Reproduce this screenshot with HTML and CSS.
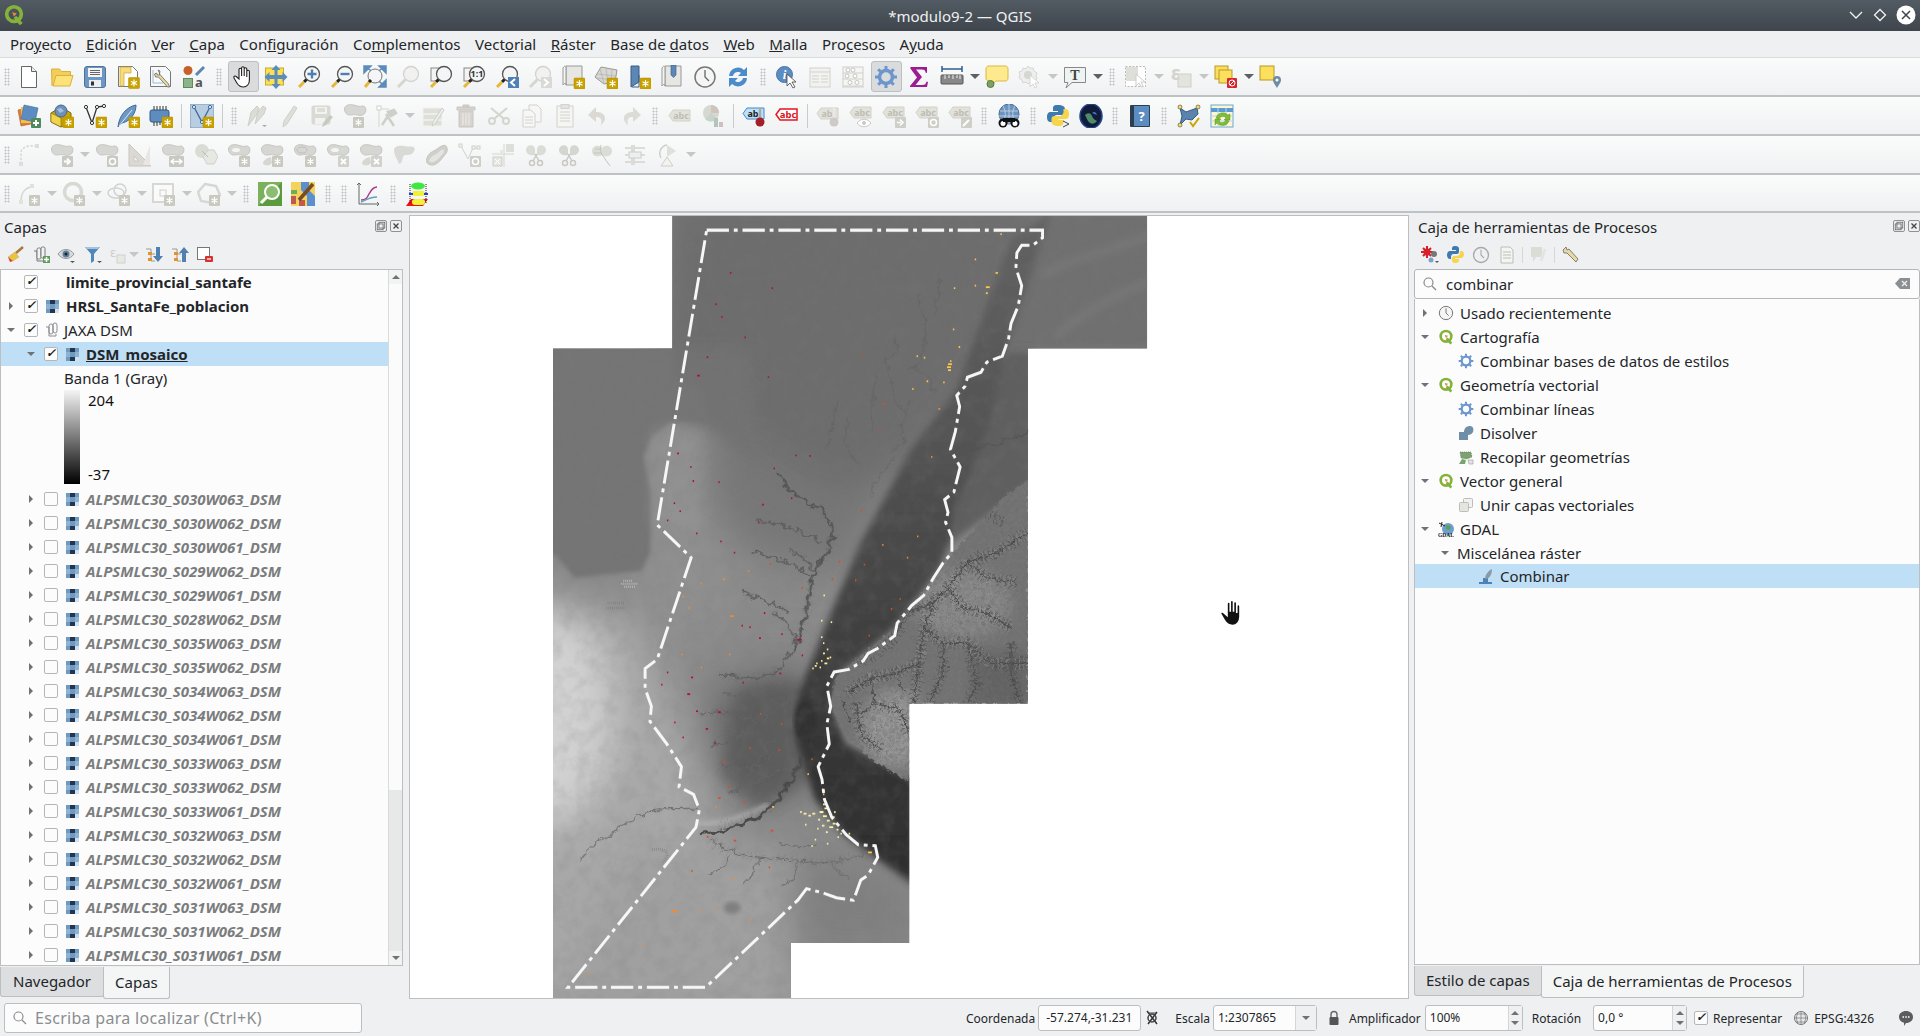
FILE: index.html
```html
<!DOCTYPE html>
<html lang="es">

<head>
    <meta charset="UTF-8">
    <title>*modulo9-2 — QGIS</title>
    <link rel="stylesheet" href="styles.css">
</head>

<body>
    <svg class="defs" width="0" height="0">
        <defs>
            <g id="bnew"><rect width="11" height="11" rx="1" fill="#c9a200" stroke="#b08d00" stroke-width=".5"/><path d="M5.5 2v7M2.5 3.7l6 3.6M8.5 3.7l-6 3.6" stroke="#fff" stroke-width="1.2"/></g>
            <g id="boff"><rect width="11" height="11" rx="1" fill="#c9c9c0"/><path d="M5.5 2v7M2.5 3.7l6 3.6M8.5 3.7l-6 3.6" stroke="#fff" stroke-width="1.2"/></g>
            <path id="blob" d="M1.5 6c0-4 5-5 9-4s6 2 9 1c3 0 4 3 3 6s-5 4-8 3-5 0-8 0-5-3-5-6z" fill="#d6d7d2" stroke="#c6c7c2"/>
            <g id="mag"><circle cx="15" cy="9" r="7.5" fill="#f4f5f6" stroke="#555" stroke-width="1.3"/><path d="M9.5 14.5 7 17" stroke="#222" stroke-width="3"/><path d="M7 17 2 22" stroke="#e8b73a" stroke-width="3"/></g>
            <g id="magoff"><circle cx="15" cy="9" r="7.5" fill="#f1f1ef" stroke="#d2d2ce" stroke-width="1.3"/><path d="M9.5 14.5 2 22" stroke="#d6d6d0" stroke-width="3"/></g>
            <path id="handp" d="M8 12V4.5a1.3 1.3 0 0 1 2.6 0V11V3a1.3 1.3 0 0 1 2.6 0v8V4a1.3 1.3 0 0 1 2.6 0v8V6.5a1.3 1.3 0 0 1 2.6 0V15c0 4-2.5 7-6 7s-5-1.5-6.5-4L3 13c-.8-1.4 1-2.6 2.2-1.5L8 14z"/>
            <path id="tag" d="M5 3h17v11H5L1 8.5z"/>
            <symbol id="qgis" viewBox="0 0 24 24"><circle cx="12" cy="11" r="8" fill="none" stroke="#85b23a" stroke-width="4"/><path d="M13 14l7 8" stroke="#85b23a" stroke-width="4"/><path d="M10 9l5 1-3 4z" fill="#e8883a"/></symbol>
            <symbol id="rast" viewBox="0 0 13 13"><rect width="13" height="13" fill="#dfe9f2"/><path d="M0 0h4v4H0zM9 0h4v4H9zM4 4h5v5H4zM0 9h4v4H0z" fill="#6f9ac2"/><path d="M4 0h5v4H4zM0 4h4v5H0zM4 9h5v4H4zM9 4h4v5H9z" fill="#22374f"/><path d="M9 4h4v5H9zM0 4h4v5H0z" fill="#8fb2d1"/><path d="M9 9h4v4H9z" fill="#d3e1ee"/></symbol>
            <symbol id="grp" viewBox="0 0 16 16"><path d="M2 5h3v9h7v-2" fill="none" stroke="#8a8c8e"/><rect x="5" y="2" width="4" height="10" rx="2" fill="none" stroke="#8a8c8e"/><rect x="9" y="1" width="4" height="10" rx="2" fill="none" stroke="#8a8c8e"/></symbol>
            <symbol id="gear" viewBox="0 0 24 24"><circle cx="12" cy="12" r="6.5" fill="none" stroke="#6d97cc" stroke-width="3.5"/><path d="M12 1v5M12 18v5M1 12h5M18 12h5M4.2 4.2l3.5 3.5M16.3 16.3l3.5 3.5M19.8 4.2l-3.5 3.5M7.7 16.3l-3.5 3.5" stroke="#6d97cc" stroke-width="3"/></symbol>
            <symbol id="clock" viewBox="0 0 24 24"><circle cx="12" cy="12" r="10" fill="#f5f5f5" stroke="#777" stroke-width="1.5"/><path d="M12 5v7l4 4" fill="none" stroke="#666" stroke-width="1.3"/></symbol>
        </defs>
    </svg>

    <header class="titlebar">
        <svg class="tb-logo"><use href="#qgis"/></svg>
        <span class="tb-title">*modulo9-2 — QGIS</span>
        <div class="win-btns">
            <svg width="16" height="16" viewBox="0 0 16 16"><path d="M2 5l6 6 6-6" fill="none" stroke="#f0f2f3" stroke-width="1.3"/></svg>
            <svg width="16" height="16" viewBox="0 0 16 16"><path d="M8 2.5 13.5 8 8 13.5 2.5 8z" fill="none" stroke="#f0f2f3" stroke-width="1.3"/></svg>
            <svg width="20" height="20" viewBox="0 0 20 20"><circle cx="10" cy="10" r="9.5" fill="#fff"/><path d="M6 6l8 8M14 6l-8 8" stroke="#3e444b" stroke-width="1.5"/></svg>
        </div>
    </header>

    <nav class="menubar">
        <span>Pro<u>y</u>ecto</span><span><u>E</u>dición</span><span><u>V</u>er</span><span><u>C</u>apa</span><span>Con<u>f</u>iguración</span><span>Co<u>m</u>plementos</span><span>Vect<u>o</u>rial</span><span><u>R</u>áster</span><span>Base de <u>d</u>atos</span><span><u>W</u>eb</span><span><u>M</u>alla</span><span>Pro<u>c</u>esos</span><span>A<u>y</u>uda</span>
    </nav>

    <!-- fila 1 -->
    <div class="toolbar">
        <i class="grip first"></i>
        <b class="tool"><svg viewBox="0 0 24 24"><path d="M4.5 1.5h10l5 5v16h-15z" fill="#fff" stroke="#666"/><path d="M14.5 1.5v5h5" fill="#eee" stroke="#666"/></svg></b>
        <b class="tool"><svg viewBox="0 0 24 24"><path d="M2 21 1.5 4h8l2 2.5h9V11" fill="#f3cf55" stroke="#d8b040"/><path d="M3 21 6 10.5h17L20 21z" fill="#fde27a" stroke="#d8b040"/></svg></b>
        <b class="tool"><svg viewBox="0 0 24 24"><rect x="1.5" y="1.5" width="21" height="21" rx="2.5" fill="#6d97c4" stroke="#4f7296"/><rect x="5" y="3" width="14" height="9" fill="#f4f4f4"/><path d="M7 5.5h10M7 7.5h10M7 9.5h10" stroke="#666"/><rect x="6" y="15" width="12" height="7" fill="#eee"/><rect x="8" y="16.5" width="3" height="4" fill="#333"/></svg></b>
        <b class="tool"><svg viewBox="0 0 24 24"><path d="M2.5 1.5h14l5 5v15h-19z" fill="#fff" stroke="#777"/><path d="M4 2v19h4V8h7V2z" fill="#f6dc7a" stroke="#c9a53a" stroke-width=".7"/><use href="#bnew" x="12.5" y="12.5"/></svg></b>
        <b class="tool"><svg viewBox="0 0 24 24"><path d="M1.5 1.5h15l5 5v15h-20z" fill="#f7f9fb" stroke="#777"/><path d="M4 5v13h10" fill="none" stroke="#9db9d6"/><path d="M9 5l2 1-.5 3 9 10 1 3h-2l-9-10-3 0-1-3 2-1 1 2h2v-2z" fill="#e8d9a0" stroke="#666" stroke-width=".8"/></svg></b>
        <b class="tool"><svg viewBox="0 0 24 24"><circle cx="6" cy="5.5" r="4.5" fill="#c8602c"/><path d="M14 10 22 2" stroke="#5b86b5" stroke-width="3"/><rect x="1.5" y="13.5" width="9" height="9" fill="#8cb48c" stroke="#5f8a5f"/><text x="13" y="22" class="svgt" font-size="13" fill="#555">a</text></svg></b>
        <i class="grip"></i>
        <b class="tool on"><svg viewBox="0 0 24 24"><use href="#handp" fill="#fff" stroke="#222" stroke-width="1.1"/></svg></b>
        <b class="tool"><svg viewBox="0 0 24 24"><rect x="1.5" y="3" width="18" height="17" fill="#fbe14f" stroke="#c9a82c"/><path d="M12 0l4.5 5h-3v5h5V7l5 5-5 5v-3h-5v5h3L12 24l-4.500-5h3v-5h-5v3l-5-5 5-5v3h5V5h-3z" fill="#5b8cbc"/></svg></b>
        <b class="tool"><svg viewBox="0 0 24 24"><use href="#mag"/><path d="M15 4.5v9M10.5 9h9" stroke="#4d7fb3" stroke-width="2.4"/></svg></b>
        <b class="tool"><svg viewBox="0 0 24 24"><use href="#mag"/><path d="M10.5 9h9" stroke="#4d7fb3" stroke-width="2.4"/></svg></b>
        <b class="tool"><svg viewBox="0 0 24 24"><path d="M1 1h7L1 8zM23 1h-7l7 7zM23 22h-7l7-7zM3 1l5 5M21 1l-5 5M21 21l-5-5" fill="#5b8cbc" stroke="#5b8cbc" stroke-width="1.5"/><circle cx="12" cy="11" r="7" fill="#f4f5f6" stroke="#777"/><path d="M7 16 2 22" stroke="#e8b73a" stroke-width="3"/><path d="M8 15l-2 2" stroke="#222" stroke-width="3"/></svg></b>
        <b class="tool"><svg viewBox="0 0 24 24"><use href="#magoff"/></svg></b>
        <b class="tool"><svg viewBox="0 0 24 24"><rect x="2" y="3" width="14" height="13" fill="#f3f3f3" stroke="#888"/><use href="#mag"/></svg></b>
        <b class="tool"><svg viewBox="0 0 24 24"><rect x="2" y="3" width="14" height="13" fill="#f3f3f3" stroke="#888"/><use href="#mag"/><text x="15" y="12" text-anchor="middle" class="svgt" font-size="9" font-weight="700" fill="#333">1:1</text></svg></b>
        <b class="tool"><svg viewBox="0 0 24 24"><use href="#mag"/><rect x="13" y="12" width="11" height="11" fill="#4f81b5"/><path d="M20 14l-4 3.5 4 3.5" fill="none" stroke="#fff" stroke-width="2"/></svg></b>
        <b class="tool"><svg viewBox="0 0 24 24"><use href="#magoff"/><rect x="13" y="12" width="11" height="11" fill="#d9d9d6"/><path d="M16 14l4 3.5-4 3.5" fill="none" stroke="#fff" stroke-width="2"/></svg></b>
        <b class="tool"><svg viewBox="0 0 24 24"><path d="M5 1h16v19H5z" fill="#e6e6e2" stroke="#999"/><path d="M2 3c2-3 3-2 3 0v17c0-2-2-2-3 0z" fill="#f4f4f0" stroke="#999"/><use href="#bnew" x="13" y="13"/></svg></b>
        <b class="tool"><svg viewBox="0 0 24 24"><path d="M1 12 7 2l16 3-2 12-11 2z" fill="#d8d8d3" stroke="#999"/><path d="M6 4l4 14M12 3l2 15M18 4l-1 13M3 9l19 2M2 13l19 2" stroke="#aaa" stroke-width=".6"/><use href="#bnew" x="13" y="13"/></svg></b>
        <b class="tool"><svg viewBox="0 0 24 24"><path d="M4 1h8v16l-8 5z" fill="#5b86b5" stroke="#3a5d84"/><path d="M12 10v12H5" fill="none" stroke="#3a5d84"/><use href="#bnew" x="13" y="13"/></svg></b>
        <b class="tool"><svg viewBox="0 0 24 24"><path d="M5 1h16v20H5z" fill="#e6e6e2" stroke="#999"/><path d="M2 3c2-3 3-2 3 0v18c0-2-2-2-3 0z" fill="#f4f4f0" stroke="#999"/><path d="M11 0h5v10l-2.5 2.5L11 10z" fill="#5b86b5" stroke="#3a5d84" stroke-width=".6"/></svg></b>
        <b class="tool"><svg><use href="#clock"/></svg></b>
        <b class="tool"><svg viewBox="0 0 24 24"><path d="M3 11a9 9 0 0 1 15-6l3-3v9h-9l3-3a5 5 0 0 0-8 3z" fill="#4d8cc8"/><path d="M21 13a9 9 0 0 1-15 6l-3 3v-9h9l-3 3a5 5 0 0 0 8-3z" fill="#4d8cc8"/></svg></b>
        <i class="grip"></i>
        <b class="tool"><svg viewBox="0 0 24 24"><circle cx="9.5" cy="9.5" r="8" fill="#5b8cc2" stroke="#4a76a5"/><text x="9.5" y="14" text-anchor="middle" class="svgti" font-size="13" fill="#fff">i</text><path d="M12 9v12l3-3 3 5 2-1-3-5h4z" fill="#fff" stroke="#444" stroke-width=".8"/></svg></b>
        <b class="tool"><svg viewBox="0 0 24 24"><rect x="2" y="3" width="20" height="19" fill="#f2f2f0" stroke="#d2d2ce"/><path d="M2 7h20M4 11h7M13 11h7M4 14h7M13 14h7M4 17h7M13 17h7" stroke="#d2d2ce"/></svg></b>
        <b class="tool"><svg viewBox="0 0 24 24"><rect x="2" y="2" width="20" height="19" fill="#f5f5f3" stroke="#cfcfca"/><path d="M2 8h20M2 14h20M1 22h22" stroke="#cfcfca"/><g fill="#fff" stroke="#c4c4bf"><circle cx="7" cy="5" r="2"/><circle cx="12" cy="5" r="2"/><circle cx="6" cy="11" r="2"/><circle cx="14" cy="11" r="2"/><circle cx="9" cy="17.5" r="2"/><circle cx="16" cy="17.5" r="2"/></g></svg></b>
        <b class="tool on"><svg><use href="#gear"/></svg></b>
        <b class="tool"><svg viewBox="0 0 24 24"><path d="M4 2h16v6l-1.5-.5c0-2-1-3-4-3H9l6 7.5-6.5 8H15c3 0 4-1 4.5-3.5l1.5.5L20 22H3v-1l7-8.5L3 3z" fill="#9c1c94"/></svg></b>
        <b class="tool"><svg viewBox="0 0 24 24"><path d="M2 4h20M2 1v6M22 1v6" stroke="#2f5f90" stroke-width="1.5" fill="none"/><rect x="1" y="10" width="22" height="9" rx="1" fill="#888" stroke="#555"/><path d="M5 10v4M9 10v3M13 10v4M17 10v3M20 10v4" stroke="#eee"/></svg></b>
        <b class="drop"></b>
        <b class="tool"><svg viewBox="0 0 24 24"><path d="M4 1h16c2 0 3 1 3 3v9c0 2-1 3-3 3H11l-3 3H5v-3c-3 0-4-1-4-3V4c0-2 1-3 3-3z" fill="#fdea8f" stroke="#dcb93e"/><circle cx="5.5" cy="19" r="3.5" fill="#7ca260" stroke="#557a3f"/></svg></b>
        <b class="tool"><svg viewBox="0 0 24 24"><path d="M10 1l2 2h3l1 3 3 2-1 3 1 3-3 1-1 3-3-1-2 2-2-2-3 1-1-3-3-2 1-3-1-3 3-1 1-3 3 1z" fill="#eee" stroke="#d6d6d2"/><circle cx="10" cy="10" r="4" fill="#d6d6d2"/><path d="M12 10v12l3-3 2 4 2-1-2-4h4z" fill="#fff" stroke="#d6d6d2"/></svg></b>
        <b class="drop off"></b>
        <b class="tool"><svg viewBox="0 0 24 24"><path d="M1.5 2.5h21v15H9L3 23l2-5.5H1.5z" fill="#eef4f4" stroke="#888"/><text x="12" y="15" text-anchor="middle" class="svgs" font-size="14" font-weight="700" fill="#444">T</text></svg></b>
        <b class="drop"></b>
        <i class="grip"></i>
        <b class="tool"><svg viewBox="0 0 24 24"><rect x="1.5" y="1.5" width="20" height="20" fill="#fff" stroke="#bbb" stroke-dasharray="2 1.5"/><rect x="2" y="2" width="12" height="14" fill="#dfdfd9"/><path d="M12 9v12l3-3 2 4 2-1-2-4h4z" fill="#fff" stroke="#ccc"/></svg></b>
        <b class="drop off"></b>
        <b class="tool"><svg viewBox="0 0 24 24"><rect x="9" y="9" width="13" height="13" fill="#e4e4de" stroke="#cfcfc8"/><text x="2" y="15" class="svgt" font-size="19" fill="#d4d4cf">ε</text></svg></b>
        <b class="drop off"></b>
        <b class="tool"><svg viewBox="0 0 24 24"><rect x="1" y="1" width="13" height="13" fill="#fbdf5d" stroke="#b99a25"/><rect x="5" y="5" width="13" height="13" fill="#fbdf5d" stroke="#b99a25"/><rect x="13" y="13" width="10" height="10" rx="1" fill="#d9242c"/><circle cx="18" cy="18" r="3" fill="none" stroke="#fff"/><path d="M16 20l4-4" stroke="#fff"/></svg></b>
        <b class="drop"></b>
        <b class="tool"><svg viewBox="0 0 24 24"><rect x="1" y="1" width="14" height="14" fill="#fbdf5d" stroke="#b99a25"/><path d="M18 23c-3-5-4-6-4-8a4 4 0 0 1 8 0c0 2-1 3-4 8z" fill="#6f8ca3"/><circle cx="18" cy="15" r="1.5" fill="#fff"/></svg></b>
    </div>

    <!-- fila 2 -->
    <div class="toolbar">
        <i class="grip first"></i>
        <b class="tool"><svg viewBox="0 0 24 24"><path d="M1 6l10-2 3 16-10 2z" fill="#e07a3c" stroke="#b05a22" stroke-width=".6"/><path d="M4 3h13v16H4z" fill="#f3c24a"/><path d="M7 1l14 3-3 14-14-3z" fill="#5b8cc2" stroke="#3e6a9a" stroke-width=".6"/><rect x="14" y="14" width="10" height="10" rx="1" fill="#4e8a5e"/><path d="M19 16v6M16 19h6" stroke="#fff" stroke-width="2"/></svg></b>
        <b class="tool"><svg viewBox="0 0 24 24"><path d="M1 9l10-6 10 6v9l-10 5-10-5z" fill="#c9a600" stroke="#7d6a10"/><path d="M1 9l10 5v9l-10-5z" fill="#f0d34a" stroke="#7d6a10" stroke-width=".6"/><circle cx="11" cy="7" r="6" fill="#6d90bc" stroke="#46688e"/><path d="M7 5l4-1 3 3-4 2z" fill="#a9c0d9"/><use href="#bnew" x="13" y="13"/></svg></b>
        <b class="tool"><svg viewBox="0 0 24 24"><path d="M3 3l6 16L14 3l7-1" fill="none" stroke="#333" stroke-width="1.3"/><g fill="#fff" stroke="#333"><circle cx="3" cy="3" r="1.6"/><circle cx="14" cy="3" r="1.6"/><circle cx="21" cy="2" r="1.6"/><circle cx="9" cy="19" r="1.6"/></g><use href="#bnew" x="13" y="13"/></svg></b>
        <b class="tool"><svg viewBox="0 0 24 24"><path d="M2 23C3 12 10 3 20 1c0 8-5 16-14 18z" fill="#6d97c4" stroke="#3e6a9a"/><path d="M3 22 16 6" stroke="#dce8f2"/><use href="#bnew" x="13" y="13"/></svg></b>
        <b class="tool"><svg viewBox="0 0 24 24"><rect x="1" y="6" width="19" height="12" rx="2" fill="#5e8cbe" stroke="#2f5a85"/><path d="M5 2v4M8 2v4M11 2v4M14 2v4M17 2v4M5 18v4M8 18v4M11 18v3" stroke="#333"/><use href="#bnew" x="13" y="13"/></svg></b>
        <i class="sep"></i>
        <b class="tool"><svg viewBox="0 0 24 24"><rect width="24" height="24" rx="2" fill="#b9cde2" stroke="#7a9ab8"/><path d="M4 3l8 15L20 3" fill="none" stroke="#3e6a9a" stroke-width="1.3"/><g fill="#eef3f8" stroke="#3e6a9a"><circle cx="4" cy="3" r="1.6"/><circle cx="20" cy="3" r="1.6"/><circle cx="12" cy="18" r="1.6"/></g><use href="#bnew" x="13" y="13"/></svg></b>
        <i class="sep"></i><i class="grip narrow"></i>
        <b class="tool"><svg viewBox="0 0 24 24"><path d="M4 22 7 8l6-6 2 2-2 6z" fill="#dcdcd7" stroke="#cfcfc9"/><path d="M11 20l3-12 5-6 3 2-2 6z" fill="#dcdcd7" stroke="#cfcfc9"/><path d="M18 21h5l-2.5 2z" fill="#a8a8a8"/></svg></b>
        <b class="tool"><svg viewBox="0 0 24 24"><path d="M6 23l1-6L17 2l3 2L10 20z" fill="#dedfd9" stroke="#cfcfc9"/></svg></b>
        <b class="tool"><svg viewBox="0 0 24 24"><rect x="1.5" y="1.5" width="19" height="19" rx="2" fill="#dadad5"/><rect x="5" y="3" width="12" height="7" fill="#f2f2f0"/><path d="M7 5h8M7 7h8" stroke="#c8c8c3"/><rect x="5" y="14" width="10" height="6" fill="#f2f2f0"/><path d="M12 23l1-4 7-8 3 2-7 8z" fill="#c9c9c3"/></svg></b>
        <b class="tool"><svg viewBox="0 0 24 24"><g transform="translate(0 -1)"><use href="#blob"/></g><use href="#boff" x="10" y="13"/></svg></b>
        <b class="tool"><svg viewBox="0 0 24 24"><path d="M3 3v20M3 5h10" fill="none" stroke="#d6d6d2"/><rect x="1" y="2" width="4" height="4" fill="#fff" stroke="#cfcfca"/><path d="M6 21 14 9M10 10l8 12M12 8l6-2 2 3-5 3z" stroke="#cfcfc9" stroke-width="2.5" fill="#cfcfc9"/></svg></b>
        <b class="drop off"></b>
        <b class="tool"><svg viewBox="0 0 24 24"><path d="M2 4h19v6H2zM2 10h19v6H2zM2 16h19v6H2z" fill="#dedfd9" stroke="#f2f2f0"/><path d="M11 22l1-4 9-14 2 2-9 14z" fill="#eee" stroke="#cfcfc9"/></svg></b>
        <b class="tool"><svg viewBox="0 0 24 24"><path d="M3 3h18v3H3zM9 1h6v2H9zM5 7h14v16H5z" fill="#d7d4d0" stroke="#c9c6c2"/><path d="M9 9v12M12 9v12M15 9v12" stroke="#eeecea"/></svg></b>
        <b class="tool"><svg viewBox="0 0 24 24"><g fill="none" stroke="#d5d5d0" stroke-width="2"><circle cx="5" cy="17" r="3"/><circle cx="19" cy="17" r="3"/><path d="M7 15 20 4M17 15 4 4"/></g></svg></b>
        <b class="tool"><svg viewBox="0 0 24 24"><g fill="#f7f7f5" stroke="#d2d2ce"><path d="M9 1h8l4 4v13H9z"/><path d="M3 6h8l4 4v13H3z"/></g><path d="M5 13h8M5 16h8M5 19h8" stroke="#d2d2ce"/></svg></b>
        <b class="tool"><svg viewBox="0 0 24 24"><rect x="4" y="2" width="16" height="21" fill="#f5f5f3" stroke="#d2d2ce"/><rect x="8" y="0.5" width="8" height="4" fill="#e4e4e0" stroke="#d2d2ce"/><path d="M7 8h10M7 11h10M7 14h10M7 17h10" stroke="#d2d2ce"/></svg></b>
        <b class="tool"><svg viewBox="0 0 24 24"><path d="M10 3 2 11l8 7v-5c5 0 6 2 5 8 6-4 6-13-5-13z" fill="#dcd8d3"/></svg></b>
        <b class="tool"><svg viewBox="0 0 24 24"><path d="M14 3l8 8-8 7v-5c-5 0-6 2-5 8-6-4-6-13 5-13z" fill="#dcdcd6"/></svg></b>
        <i class="grip"></i>
        <b class="tool"><svg viewBox="0 0 24 24"><use href="#tag" y="3" fill="#e2e2da" stroke="#d2d2c9"/><text x="13" y="15" text-anchor="middle" class="svgt" font-size="9" font-weight="700" fill="#bdbdb5">abc</text></svg></b>
        <b class="tool"><svg viewBox="0 0 24 24"><circle cx="10" cy="9" r="8" fill="#d6d8d2"/><path d="M10 9V1a8 8 0 0 1 8 8z" fill="#cfc3bc"/><path d="M10 9l6 6a8 8 0 0 1-12 0z" fill="#c8d3ca"/><rect x="13" y="14" width="4" height="9" fill="#b3c4bc"/><rect x="18" y="18" width="4" height="5" fill="#cfbfc0"/></svg></b>
        <i class="sep"></i>
        <b class="tool"><svg viewBox="0 0 24 24"><use href="#tag" y="1" fill="#bfe0f8" stroke="#3a8ad0"/><text x="11" y="13" text-anchor="middle" class="svgt" font-size="9" font-weight="700" fill="#222">ab</text><path d="M18 4v10" stroke="#aaa" stroke-width="2.5"/><circle cx="18" cy="18" r="4.5" fill="#a3202a"/></svg></b>
        <b class="tool"><svg viewBox="0 0 24 24"><use href="#tag" y="2" fill="#fff" stroke="#e8141e" stroke-width="1.5"/><text x="13" y="14" text-anchor="middle" class="svgt" font-size="9.5" font-weight="700" fill="#d8141e">abc</text></svg></b>
        <i class="sep"></i>
        <b class="tool"><svg viewBox="0 0 24 24"><use href="#tag" y="1" fill="#e2e2da" stroke="#d2d2c9"/><text x="11" y="13" text-anchor="middle" class="svgt" font-size="9" font-weight="700" fill="#bdbdb5">ab</text><path d="M18 4v10" stroke="#e8e8e6" stroke-width="2.5"/><circle cx="18" cy="18" r="4.5" fill="#cfc9c9"/></svg></b>
        <b class="tool"><svg viewBox="0 0 24 24"><use href="#tag" y="0" fill="#e2e2da" stroke="#d2d2c9"/><text x="13" y="12" text-anchor="middle" class="svgt" font-size="9" font-weight="700" fill="#bdbdb5">abc</text><path d="M8 19c4-5 10-5 14 0-4 5-10 5-14 0z" fill="#fff" stroke="#c8c8c8"/><circle cx="15" cy="19" r="2" fill="#c8c8c8"/></svg></b>
        <b class="tool"><svg viewBox="0 0 24 24"><use href="#tag" y="0" fill="#e2e2da" stroke="#d2d2c9"/><text x="13" y="12" text-anchor="middle" class="svgt" font-size="9" font-weight="700" fill="#bdbdb5">abc</text><rect x="13" y="13" width="11" height="11" rx="1" fill="#cfcfca"/><path d="M15 18.5h4M18 15.5l3 3-3 3" stroke="#fff" stroke-width="1.5" fill="none"/></svg></b>
        <b class="tool"><svg viewBox="0 0 24 24"><use href="#tag" y="0" fill="#e2e2da" stroke="#d2d2c9"/><text x="13" y="12" text-anchor="middle" class="svgt" font-size="9" font-weight="700" fill="#bdbdb5">abc</text><rect x="13" y="13" width="11" height="11" rx="1" fill="#cfcfca"/><circle cx="18.5" cy="18.5" r="3" fill="none" stroke="#fff" stroke-width="1.5"/></svg></b>
        <b class="tool"><svg viewBox="0 0 24 24"><use href="#tag" y="0" fill="#e2e2da" stroke="#d2d2c9"/><text x="13" y="12" text-anchor="middle" class="svgt" font-size="9" font-weight="700" fill="#bdbdb5">abc</text><rect x="13" y="13" width="11" height="11" rx="1" fill="#cfcfca"/><path d="M15 22l6-6" stroke="#fff" stroke-width="2"/></svg></b>
        <i class="grip"></i>
        <b class="tool"><svg viewBox="0 0 24 24"><circle cx="12" cy="10" r="10" fill="#6d93bf" stroke="#4a6d94"/><path d="M3 7h18M2 12h20M12 0v20M6 2c3 5 3 11 0 16M18 2c-3 5-3 11 0 16" fill="none" stroke="#c9d9ea" stroke-width=".8"/><circle cx="6" cy="19" r="4.5" fill="#111"/><circle cx="18" cy="19" r="4.5" fill="#111"/><circle cx="6" cy="19.5" r="2.5" fill="#fff"/><circle cx="18" cy="19.5" r="2.5" fill="#fff"/><path d="M6 14h12v4H6z" fill="#111"/></svg></b>
        <i class="grip"></i>
        <b class="tool"><svg viewBox="0 0 24 24"><path d="M11.5 1C7 1 7 3 7 5v2h5v1H5c-3 0-4 2-4 5s1 5 4 5h2v-3c0-2 2-4 4-4h5c2 0 3-1 3-3V5c0-2-2-4-7.5-4z" fill="#3d7ab0"/><path d="M12.5 22c4.5 0 5-2 5-4v-2h-5v-1h7c2.5 0 3.5-2 3.5-5s-1-5-4-5h-1.5v3c0 2-2 4-4 4h-5c-2 0-3 1-3 3v3c0 2 2 4 7.5 4z" fill="#f6d44b"/><path d="M17 17l6 3-6 3" fill="none" stroke="#444"/></svg></b>
        <b class="tool"><svg viewBox="0 0 24 24"><ellipse cx="12" cy="12" rx="11" ry="12" fill="#111c3a" stroke="#24458c" stroke-width="1.5"/><path d="M6 11c3-3 6-2 7 1s3 4 5 5c-3 4-7 3-9 0z" fill="#4f8a6a"/><path d="M13 9c2-2 4-1 5 2z" fill="#4a78b8"/></svg></b>
        <i class="grip"></i>
        <b class="tool"><svg viewBox="0 0 24 24"><rect x="2" y="1" width="20" height="22" rx="1" fill="#2c3e50"/><rect x="6" y="2" width="15" height="20" fill="#5b8cc2"/><text x="13.5" y="17" text-anchor="middle" class="svgt" font-size="13" fill="#fff">?</text></svg></b>
        <i class="grip"></i>
        <b class="tool"><svg viewBox="0 0 24 24"><path d="M3 4l6 4 11-4 1 6-6 6-6-1-6 6 2-9z" fill="#5c83ad" stroke="#3a5a7d"/><g fill="#f3df5a" stroke="#444" stroke-width=".6"><circle cx="3" cy="3" r="2"/><circle cx="21" cy="3" r="2"/><circle cx="3" cy="21" r="2"/></g><path d="M13 18l3 4 6-8" fill="none" stroke="#c9a600" stroke-width="2"/></svg></b>
        <b class="tool"><svg viewBox="0 0 24 24"><rect x="1" y="1" width="22" height="22" fill="#fdf6cf" stroke="#6aa6d8"/><path d="M1 6h22" stroke="#5b9bd5" stroke-width="4"/><path d="M1 12h22M1 17h22M8 4v19M16 4v19" stroke="#b9d3ea"/><path d="M6 14a7 7 0 0 1 12-3l2-1v6h-6l2-2a4 4 0 0 0-7 1zM19 17a7 7 0 0 1-12 2l-2 2v-6h6l-2 2a4 4 0 0 0 7-1z" fill="#7cbd3c" stroke="#4f8c1e" stroke-width=".4"/></svg></b>
    </div>

    <!-- fila 3 -->
    <div class="toolbar">
        <i class="grip first"></i>
        <b class="tool"><svg viewBox="0 0 24 24"><path d="M4 21V10c0-4 3-6 8-7h8" fill="none" stroke="#d6d6d2" stroke-dasharray="2.5 1.5" stroke-width="1.5"/><rect x="2" y="19" width="4" height="4" fill="#dedfda"/><rect x="18" y="1" width="4" height="4" fill="#dedfda"/></svg></b>
        <b class="tool"><svg viewBox="0 0 24 24"><use href="#blob"/><rect x="12" y="13" width="11" height="11" rx="1" fill="#c9c9c3"/><path d="M14 18.5h4M17 15.5l3 3-3 3" stroke="#fff" stroke-width="1.8" fill="none"/></svg></b>
        <b class="drop off"></b>
        <b class="tool"><svg viewBox="0 0 24 24"><use href="#blob"/><rect x="12" y="13" width="11" height="11" rx="1" fill="#c9c9c3"/><circle cx="17.5" cy="18.5" r="3" fill="none" stroke="#fff" stroke-width="1.5"/></svg></b>
        <b class="tool"><svg viewBox="0 0 24 24"><path d="M1 1l22 22H1z" fill="#dcd8d3" stroke="#c9c5c0"/><path d="M6 13l5 5H6z" fill="#f4f4f2" stroke="#c9c5c0"/><path d="M22 2v20h-7" fill="#e8e6e2"/></svg></b>
        <b class="tool"><svg viewBox="0 0 24 24"><use href="#blob"/><rect x="8" y="13" width="15" height="11" rx="1" fill="#c9c9c3"/><path d="M10 18.5h11M13 16l-3 2.5 3 2.5M18 16l3 2.5-3 2.5" stroke="#fff" stroke-width="1.3" fill="none"/></svg></b>
        <b class="tool"><svg viewBox="0 0 24 24"><circle cx="8" cy="8" r="7" fill="#dcdcd7"/><path d="M14 7h6l4 7-4 7h-7l-4-7z" fill="#e8e8e3" stroke="#d0d0cb"/><path d="M8 8l6 6" stroke="#bbb"/></svg></b>
        <b class="tool"><svg viewBox="0 0 24 24"><use href="#blob"/><ellipse cx="9" cy="7" rx="4" ry="2" fill="#f4f4f2"/><use href="#boff" x="12" y="13"/></svg></b>
        <b class="tool"><svg viewBox="0 0 24 24"><use href="#blob"/><path d="M3 21c0-4 4-6 8-7l1 6c-2 3-7 3-9 1z" fill="#d6d7d2"/><use href="#boff" x="12" y="13"/></svg></b>
        <b class="tool"><svg viewBox="0 0 24 24"><use href="#blob"/><ellipse cx="9" cy="7" rx="5" ry="3" fill="none" stroke="#c0c1bc"/><use href="#boff" x="12" y="13"/></svg></b>
        <b class="tool"><svg viewBox="0 0 24 24"><use href="#blob"/><ellipse cx="9" cy="7" rx="4" ry="2" fill="#f4f4f2"/><rect x="12" y="13" width="11" height="11" rx="1" fill="#d2d2cc"/><path d="M15 16l5 5M20 16l-5 5" stroke="#fff" stroke-width="1.8"/></svg></b>
        <b class="tool"><svg viewBox="0 0 24 24"><use href="#blob"/><path d="M3 21c0-4 4-6 8-7l1 6c-2 3-7 3-9 1z" fill="#d6d7d2"/><rect x="12" y="13" width="11" height="11" rx="1" fill="#d2d2cc"/><path d="M15 16l5 5M20 16l-5 5" stroke="#fff" stroke-width="1.8"/></svg></b>
        <b class="tool"><svg viewBox="0 0 24 24"><path d="M2 7c0-4 6-5 10-4s7 0 10 1c2 3-1 9-8 8-3 0-3 2-4 6-1 3-3 4-4 1-1-4-4-7-4-12z" fill="#d9dad5"/></svg></b>
        <b class="tool"><svg viewBox="0 0 24 24"><path d="M2 15C4 9 8 9 12 6s9-6 10-1-2 6-4 9-7 9-12 8-5-4-4-7z" fill="#cfd0cb" stroke="#c4c5c0"/><path d="M5 16c2-4 6-4 9-7s5-3 5-1-3 5-5 7-5 5-8 4-2-2-1-3z" fill="#e4e4e0"/></svg></b>
        <b class="tool"><svg viewBox="0 0 24 24"><path d="M3 3l7 13 5-11 5 0" fill="none" stroke="#d2d2ce"/><g fill="#f5f5f3" stroke="#cfcfca"><rect x="1" y="1" width="3" height="3"/><rect x="14" y="3" width="3" height="3"/><rect x="19" y="3" width="3" height="3"/></g><rect x="12" y="13" width="11" height="11" rx="1" fill="#cfcfc9"/><circle cx="17.5" cy="18.5" r="3" fill="none" stroke="#fff" stroke-width="1.5"/></svg></b>
        <b class="tool"><svg viewBox="0 0 24 24"><path d="M13 1v23M1 11h22" stroke="#d6d6d2"/><rect x="9" y="7" width="4" height="4" fill="#e6e6e2"/><rect x="15" y="1" width="8" height="8" fill="#dfdfd9"/><rect x="2" y="14" width="9" height="9" fill="#e6e6e0" stroke="#cfcfca"/><path d="M4 16l5 5M9 16l-5 5" stroke="#fff"/></svg></b>
        <b class="tool"><svg viewBox="0 0 24 24"><path d="M11 12c-5 1-9-1-9-5 0-5 8-7 9-1zM13 12c5 1 9-1 9-5 0-5-8-7-9-1z" fill="#dcdcd7"/><g fill="none" stroke="#c9c9c4" stroke-width="1.5"><circle cx="8" cy="20" r="2.5"/><circle cx="16" cy="20" r="2.5"/><path d="M9 18l4-7M15 18l-4-7"/></g></svg></b>
        <b class="tool"><svg viewBox="0 0 24 24"><path d="M11 12c-5 1-9-1-9-5 0-5 8-7 9-1zM13 12c5 1 9-1 9-5 0-5-8-7-9-1z" fill="#d6d6d1"/><g fill="none" stroke="#c9c9c4" stroke-width="1.5"><circle cx="8" cy="20" r="2.5"/><circle cx="16" cy="20" r="2.5"/><path d="M9 18l4-7M15 18l-4-7"/></g></svg></b>
        <b class="tool"><svg viewBox="0 0 24 24"><path d="M12 12C7 15 2 13 2 8s7-7 10-3c3-4 10-2 10 3s-5 7-10 4z" fill="#dcdcd7"/><path d="M11 2c-1 5-1 8 2 11l7 10" fill="none" stroke="#c4c4bf"/><path d="M5 6h6M4 10h8" stroke="#c4c4bf"/></svg></b>
        <b class="tool"><svg viewBox="0 0 24 24"><path d="M2 5h20M2 12h20M2 19h20" stroke="#dcdcd7" stroke-width="2"/><path d="M10 2v20" stroke="#dcdcd7" stroke-width="4"/><rect x="6" y="9" width="12" height="6" fill="#eee" stroke="#ccc"/></svg></b>
        <b class="tool"><svg viewBox="0 0 24 24"><path d="M11 2l9 6-9 6z" fill="#dfe0da"/><path d="M11 14l6 9H5z" fill="#f2f2ef" stroke="#cfcfca"/><path d="M11 2C5 3 2 9 5 15" fill="none" stroke="#cfcfca" stroke-width="1.5"/></svg></b>
        <b class="drop off"></b>
    </div>

    <!-- fila 4 -->
    <div class="toolbar last">
        <i class="grip first"></i>
        <b class="tool"><svg viewBox="0 0 24 24"><path d="M4 19C4 11 8 6 14 5" fill="none" stroke="#d6d6d2" stroke-width="1.5"/><rect x="2" y="18" width="4" height="4" fill="#e2e2dc"/><rect x="13" y="2" width="4" height="4" fill="#e2e2dc"/><use href="#boff" x="12" y="13"/></svg></b>
        <b class="drop off"></b>
        <b class="tool"><svg viewBox="0 0 24 24"><circle cx="11" cy="10" r="8.5" fill="none" stroke="#d8d9d4" stroke-width="3.5"/><use href="#boff" x="12" y="13"/></svg></b>
        <b class="drop off"></b>
        <b class="tool"><svg viewBox="0 0 24 24"><circle cx="13" cy="8" r="6" fill="none" stroke="#d2d3ce" stroke-width="1.5"/><ellipse cx="9" cy="11" rx="8" ry="5" fill="none" stroke="#d2d3ce" stroke-width="1.5"/><use href="#boff" x="12" y="13"/></svg></b>
        <b class="drop off"></b>
        <b class="tool"><svg viewBox="0 0 24 24"><rect x="1" y="2" width="20" height="18" fill="#fafafa" stroke="#d8d8d3" stroke-width="2"/><rect x="8" y="8" width="6" height="6" fill="none" stroke="#cfcfca"/><use href="#boff" x="12" y="13"/></svg></b>
        <b class="drop off"></b>
        <b class="tool"><svg viewBox="0 0 24 24"><path d="M8 2l11 2 4 9-8 8-11-2-3-9z" fill="none" stroke="#d6d7d2" stroke-width="2.5"/><use href="#boff" x="12" y="13"/></svg></b>
        <b class="drop off"></b>
        <i class="grip"></i>
        <b class="tool"><svg viewBox="0 0 24 24"><rect width="24" height="24" fill="#7bb15a"/><path d="M24 0v24H0" fill="#5c9a3e"/><circle cx="14" cy="10" r="7" fill="#8bbd6e" stroke="#fff" stroke-width="2"/><path d="M9 15l-6 6" stroke="#fff" stroke-width="3"/></svg></b>
        <b class="tool"><svg viewBox="0 0 24 24"><rect width="24" height="24" fill="#f3d35b"/><path d="M10 0v8l6 6v10h8V14l-6-6V0z" fill="#5c8fd0"/><path d="M0 8h6v4H0z" fill="#6cae5a"/><path d="M0 14h5v8H0zM8 18h6v6H8z" fill="#c05a50"/><path d="M8 18 22 2" stroke="#7a4a22" stroke-width="3.5"/></svg></b>
        <i class="grip"></i><i class="grip"></i>
        <b class="tool"><svg viewBox="0 0 24 24"><path d="M3 1v21h20" fill="none" stroke="#666"/><path d="M1 3l2-2 2 2M21 20l2 2-2 2" fill="none" stroke="#666"/><path d="M5 18c5 0 6-2 8-6s4-7 8-7" fill="none" stroke="#b03a8e" stroke-width="1.5"/><path d="M5 20c5-2 9-5 16-5" fill="none" stroke="#5ba5b8" stroke-width="1.5"/></svg></b>
        <i class="grip"></i>
        <b class="tool"><svg viewBox="0 0 24 24"><ellipse cx="13" cy="4" rx="7" ry="3.5" fill="#3fe83f"/><rect x="7" y="9" width="13" height="5" rx="2" fill="#f1f13c"/><path d="M1 24l5-7h17l-5 7z" fill="#f01010"/><rect x="7" y="17" width="13" height="6" rx="3" fill="#f1f13c"/><path d="M5 2v20M21 2v20" stroke="#222" stroke-dasharray="1 1"/><path d="M4 12h4M19 12h4" stroke="#2040e0" stroke-width="2"/></svg></b>
    </div>

    <main class="workspace">
        <section class="dock left">
            <div class="dock-title"><span>Capas</span>
                <div class="dock-btns"><i class="dbtn"><svg viewBox="0 0 12 12"><rect x="1.5" y="3.5" width="7" height="7" fill="none" stroke="#666"/><rect x="3.5" y="1.5" width="7" height="7" fill="none" stroke="#666"/></svg></i><i class="dbtn"><svg viewBox="0 0 12 12"><path d="M3 3l6 6M9 3l-6 6" stroke="#444" stroke-width="1.5"/></svg></i></div>
            </div>
            <div class="dock-tools">
                <svg class="dt first-dt" viewBox="0 0 18 18"><path d="M1 11l7-5 4 5-6 4z" fill="#e8c63c" stroke="#d88" stroke-width=".4"/><path d="M1 11l5 4-3 1z" fill="#d8402a"/><path d="M9 7l7-6" stroke="#a8783c" stroke-width="2.5"/></svg>
                <svg class="dt" viewBox="0 0 18 18"><path d="M1 5h3v10h8" fill="none" stroke="#777"/><rect x="4" y="2" width="4" height="11" rx="1.5" fill="#f2f2f2" stroke="#777"/><rect x="8" y="1" width="4" height="11" rx="1.5" fill="#f2f2f2" stroke="#777"/><rect x="10" y="10" width="7" height="7" fill="#5f9a5f"/><path d="M13.5 11v5M11 13.5h5" stroke="#fff" stroke-width="1.5"/></svg>
                <svg class="dt" viewBox="0 0 18 18"><path d="M0 8c4-6 12-6 16 0-4 6-12 6-16 0z" fill="#d8dadc" stroke="#999"/><circle cx="8" cy="8" r="3.5" fill="#5c7f9f"/><circle cx="8" cy="8" r="1.5" fill="#222"/><path d="M12 15h5l-2.5 2z" fill="#555"/></svg>
                <svg class="dt" viewBox="0 0 18 18"><path d="M1 1h15l-6 7v7l-3 2V8z" fill="#4f87b8"/><path d="M1 1h15l-2 2H3z" fill="#a4c4de"/><path d="M13 15h5l-2.5 2z" fill="#555"/></svg>
                <svg class="dt" viewBox="0 0 18 18"><text x="1" y="11" class="svgt" font-size="13" fill="#cfcfca">ε</text><rect x="8" y="9" width="8" height="8" fill="#e8e8e3" stroke="#d2d2cd"/></svg>
                <b class="drop off mini"></b>
                <svg class="dt" viewBox="0 0 18 18"><path d="M1 3h5v12h4M6 8h4" fill="none" stroke="#999"/><rect x="3" y="6" width="4" height="3" fill="#e8902a"/><rect x="3" y="12" width="4" height="3" fill="#e8902a"/><path d="M11 1h4v9h3l-5 6-5-6h3z" fill="#4f80b0"/></svg>
                <svg class="dt" viewBox="0 0 18 18"><path d="M1 3h5v12h4M6 8h4" fill="none" stroke="#999"/><rect x="3" y="6" width="4" height="3" fill="#e8902a"/><rect x="3" y="12" width="4" height="3" fill="#e8902a"/><path d="M11 16h4V7h3l-5-6-5 6h3z" fill="#4f80b0"/></svg>
                <svg class="dt" viewBox="0 0 18 18"><rect x="1.5" y="1.5" width="12" height="12" fill="#fff" stroke="#777"/><rect x="9" y="10" width="8" height="6" rx="1" fill="#d93030"/><path d="M11 13h4" stroke="#fff" stroke-width="1.3"/></svg>
            </div>
            <div class="tree-wrap">
                <div class="tree">
                    <div class="row"><i class="exp"></i><i class="chk on"></i><i class="lyr"></i><b>limite_provincial_santafe</b></div>
                    <div class="row"><i class="exp closed"></i><i class="chk on"></i><svg class="lyr"><use href="#rast"/></svg><b>HRSL_SantaFe_poblacion</b></div>
                    <div class="row"><i class="exp open"></i><i class="chk on"></i><svg class="lyr grpic"><use href="#grp"/></svg><span>JAXA DSM</span></div>
                    <div class="row sub sel"><i class="exp open"></i><i class="chk on"></i><svg class="lyr"><use href="#rast"/></svg><b class="cur">DSM_mosaico</b></div>
                    <div class="legend-title">Banda 1 (Gray)</div>
                    <div class="legend"><i class="ramp"></i><div class="ramp-labels"><span>204</span><span>-37</span></div></div>
                    <div class="row sub off"><i class="exp closed"></i><i class="chk"></i><svg class="lyr"><use href="#rast"/></svg><em>ALPSMLC30_S030W063_DSM</em></div>
                    <div class="row sub off"><i class="exp closed"></i><i class="chk"></i><svg class="lyr"><use href="#rast"/></svg><em>ALPSMLC30_S030W062_DSM</em></div>
                    <div class="row sub off"><i class="exp closed"></i><i class="chk"></i><svg class="lyr"><use href="#rast"/></svg><em>ALPSMLC30_S030W061_DSM</em></div>
                    <div class="row sub off"><i class="exp closed"></i><i class="chk"></i><svg class="lyr"><use href="#rast"/></svg><em>ALPSMLC30_S029W062_DSM</em></div>
                    <div class="row sub off"><i class="exp closed"></i><i class="chk"></i><svg class="lyr"><use href="#rast"/></svg><em>ALPSMLC30_S029W061_DSM</em></div>
                    <div class="row sub off"><i class="exp closed"></i><i class="chk"></i><svg class="lyr"><use href="#rast"/></svg><em>ALPSMLC30_S028W062_DSM</em></div>
                    <div class="row sub off"><i class="exp closed"></i><i class="chk"></i><svg class="lyr"><use href="#rast"/></svg><em>ALPSMLC30_S035W063_DSM</em></div>
                    <div class="row sub off"><i class="exp closed"></i><i class="chk"></i><svg class="lyr"><use href="#rast"/></svg><em>ALPSMLC30_S035W062_DSM</em></div>
                    <div class="row sub off"><i class="exp closed"></i><i class="chk"></i><svg class="lyr"><use href="#rast"/></svg><em>ALPSMLC30_S034W063_DSM</em></div>
                    <div class="row sub off"><i class="exp closed"></i><i class="chk"></i><svg class="lyr"><use href="#rast"/></svg><em>ALPSMLC30_S034W062_DSM</em></div>
                    <div class="row sub off"><i class="exp closed"></i><i class="chk"></i><svg class="lyr"><use href="#rast"/></svg><em>ALPSMLC30_S034W061_DSM</em></div>
                    <div class="row sub off"><i class="exp closed"></i><i class="chk"></i><svg class="lyr"><use href="#rast"/></svg><em>ALPSMLC30_S033W063_DSM</em></div>
                    <div class="row sub off"><i class="exp closed"></i><i class="chk"></i><svg class="lyr"><use href="#rast"/></svg><em>ALPSMLC30_S033W062_DSM</em></div>
                    <div class="row sub off"><i class="exp closed"></i><i class="chk"></i><svg class="lyr"><use href="#rast"/></svg><em>ALPSMLC30_S033W061_DSM</em></div>
                    <div class="row sub off"><i class="exp closed"></i><i class="chk"></i><svg class="lyr"><use href="#rast"/></svg><em>ALPSMLC30_S032W063_DSM</em></div>
                    <div class="row sub off"><i class="exp closed"></i><i class="chk"></i><svg class="lyr"><use href="#rast"/></svg><em>ALPSMLC30_S032W062_DSM</em></div>
                    <div class="row sub off"><i class="exp closed"></i><i class="chk"></i><svg class="lyr"><use href="#rast"/></svg><em>ALPSMLC30_S032W061_DSM</em></div>
                    <div class="row sub off"><i class="exp closed"></i><i class="chk"></i><svg class="lyr"><use href="#rast"/></svg><em>ALPSMLC30_S031W063_DSM</em></div>
                    <div class="row sub off"><i class="exp closed"></i><i class="chk"></i><svg class="lyr"><use href="#rast"/></svg><em>ALPSMLC30_S031W062_DSM</em></div>
                    <div class="row sub off"><i class="exp closed"></i><i class="chk"></i><svg class="lyr"><use href="#rast"/></svg><em>ALPSMLC30_S031W061_DSM</em></div>
                </div>
                <div class="vscroll">
                    <i class="sb-btn"><i class="tri-up"></i></i>
                    <i class="sb-track"></i>
                    <i class="sb-thumb"></i>
                    <i class="sb-btn"><i class="tri-dn"></i></i>
                </div>
            </div>
            <div class="tabs">
                <span class="tab">Navegador</span><span class="tab cur">Capas</span>
            </div>
        </section>

        <section class="canvas">
            <svg class="map" viewBox="0 0 998 782">
                <defs>
                    <clipPath id="tiles"><path d="M541 10H1521V275H1275V980H1030V1455H786V1568H295V275H541z"/></clipPath>
                    <clipPath id="upl"><path d="M1275 535 1275 980H1030V1135L960 1095 905 1050 868 985 880 925 1000 830 1090 720 1120 680 1225 570z"/></clipPath>
                    <filter id="b40" x="-30%" y="-30%" width="160%" height="160%"><feGaussianBlur stdDeviation="40"/></filter>
                    <filter id="b15" x="-20%" y="-20%" width="140%" height="140%"><feGaussianBlur stdDeviation="15"/></filter>
                    <filter id="b8" x="-20%" y="-20%" width="140%" height="140%"><feGaussianBlur stdDeviation="8"/></filter>
                    <filter id="b4" x="-10%" y="-10%" width="120%" height="120%"><feGaussianBlur stdDeviation="4"/></filter>
                    <filter id="disp" filterUnits="userSpaceOnUse" x="280" y="0" width="1260" height="1580"><feTurbulence type="fractalNoise" baseFrequency=".055" numOctaves="3" seed="7"/><feDisplacementMap in="SourceGraphic" scale="22" xChannelSelector="R" yChannelSelector="G"/><feGaussianBlur stdDeviation="1"/></filter>
                    <filter id="disp2" filterUnits="userSpaceOnUse" x="280" y="0" width="1260" height="1580"><feTurbulence type="fractalNoise" baseFrequency=".12" numOctaves="3" seed="11"/><feDisplacementMap in="SourceGraphic" scale="14" xChannelSelector="R" yChannelSelector="G"/></filter>
                    <filter id="noise" x="0" y="0" width="100%" height="100%"><feTurbulence type="fractalNoise" baseFrequency=".16" numOctaves="3" seed="4"/><feColorMatrix values="0 0 0 0 .15  0 0 0 0 .15  0 0 0 0 .15  1.5 0 0 0 -.55"/></filter>
                    <filter id="grain" x="0" y="0" width="100%" height="100%"><feTurbulence type="fractalNoise" baseFrequency=".035" numOctaves="4" seed="9"/><feColorMatrix values="0 0 0 0 .2  0 0 0 0 .2  0 0 0 0 .2  .4 0 0 0 -.16"/></filter>
                    <linearGradient id="rband" x1="0" y1="0" x2="0" y2="1"><stop offset="0" stop-color="#626262"/><stop offset=".35" stop-color="#535353"/><stop offset=".55" stop-color="#454545"/><stop offset=".8" stop-color="#353535"/><stop offset="1" stop-color="#2c2c2c"/></linearGradient>
                </defs>
                <g transform="translate(0 -6) scale(.4847 .5038)">
                    <g clip-path="url(#tiles)">
                        <rect x="295" y="10" width="1230" height="1560" fill="#8a8a8a"/>
                        <g filter="url(#b40)">
                            <path d="M520 -40H1340L1240 300 1040 520 880 560 640 420 500 340z" fill="#6d6d6d"/>
                            <path d="M640 420 880 560 1000 530 900 720 760 700 600 620z" fill="#777"/>
                            <path d="M200 800H470L560 1000 640 1250 500 1620H200z" fill="#a8a8a8"/>
                            <ellipse cx="285" cy="1000" rx="130" ry="220" fill="#d2d2d2"/>
                            <path d="M460 1250 800 1270 800 1620H260z" fill="#a0a0a0"/>
                            <path d="M620 960 800 900 830 1140 700 1180 620 1060z" fill="#666"/>
                            <path d="M790 1260 1040 1340 1040 1470 780 1470z" fill="#808080"/>
                            <path d="M500 620 620 560 680 780 560 860 460 760z" fill="#909090"/>
                        </g>
                        <path d="M680 950 800 930 820 1130 720 1190 640 1120z" fill="#5a5a5a" opacity=".8" filter="url(#b15)"/>
                        <path d="M541 275H700L720 500 620 430 541 410z" fill="#727272" filter="url(#b15)"/>
                        <!-- laguna -->
                        <path d="M280 270H541V340L600 350 620 420 540 420 500 450 482 490 498 560 495 680 478 716 340 730 300 685 280 690z" fill="#747474" filter="url(#b4)"/>
                        <path d="M500 440 545 430 605 440 600 640 500 620z" fill="#949494" opacity=".7" filter="url(#b15)"/>
                        <!-- NE -->
                        <path d="M1310 0H1530V280H1220L1260 190z" fill="#6f6f6f" filter="url(#b8)"/>
                        <path d="M1300 130C1380 90 1450 80 1530 50M1330 250C1400 200 1450 170 1530 140" fill="none" stroke="#7b7b7b" stroke-width="10" filter="url(#b8)"/>
                        <path d="M1240 280H1285V540L1120 660 1130 380z" fill="#5e5e5e" filter="url(#b8)"/>
                        <!-- banda oscura -->
                        <path d="M1322 5 1240 60 1125 360 1030 480 930 660 868 800 800 960 795 1050 835 1170 895 1240 1040 1340V1130L900 1060 868 985 880 925 1000 830 1090 715 1120 650 1130 580 1190 440 1230 280z" fill="url(#rband)" filter="url(#b8)"/>
                        <ellipse cx="815" cy="1015" rx="22" ry="42" fill="#303030" filter="url(#b4)"/>
                        <!-- lomas -->
                        <g filter="url(#disp2)">
                            <g clip-path="url(#upl)">
                                <rect x="860" y="530" width="420" height="610" fill="#747474"/>
                                <ellipse cx="1000" cy="1030" rx="70" ry="80" fill="#989898" filter="url(#b15)"/>
                                <ellipse cx="1140" cy="780" rx="100" ry="70" fill="#8c8c8c" filter="url(#b15)"/>
                                <rect x="1160" y="880" width="120" height="110" fill="#626262" filter="url(#b15)"/>
                                <rect x="860" y="530" width="420" height="610" filter="url(#noise)"/>
                                <g fill="none" stroke-linecap="butt">
                                    <g stroke="#4e4e4e" stroke-width="24" stroke-dasharray="2 7" opacity=".65">
                                        <path d="M1275 640 1210 680 1150 700 1110 750 1080 780 1060 830 1050 900 1040 980"/>
                                        <path d="M1150 700 1190 730 1250 740M1110 750 1140 790 1190 800 1240 830M1080 780 1020 800 1000 850M1060 830 1100 860 1150 860 1200 900 1275 900M1050 900 1000 920 950 930 900 960M1100 860 1100 920 1070 980M1150 860 1170 940 1150 980M1240 860 1240 920 1260 980M960 980 1010 990 1030 1040M920 980 930 1040 970 1070M1180 600 1230 620M1000 850 960 880 920 900"/>
                                    </g>
                                    <g stroke="#a0a0a0" stroke-width="22" stroke-dasharray="1.5 7.5" stroke-dashoffset="4" opacity=".45">
                                        <path d="M1275 640 1210 680 1150 700 1110 750 1080 780 1060 830 1050 900 1040 980"/>
                                        <path d="M1150 700 1190 730 1250 740M1110 750 1140 790 1190 800 1240 830M1060 830 1100 860 1150 860 1200 900 1275 900M1050 900 1000 920 950 930 900 960M960 980 1010 990 1030 1040M920 980 930 1040 970 1070"/>
                                    </g>
                                    <g stroke="#4b4b4b" stroke-width="2.5">
                                        <path d="M1275 640 1210 680 1150 700 1110 750 1080 780 1060 830 1050 900 1040 980"/>
                                        <path d="M1150 700 1190 730 1250 740M1110 750 1140 790 1190 800 1240 830M1080 780 1020 800 1000 850M1060 830 1100 860 1150 860 1200 900 1275 900M1050 900 1000 920 950 930 900 960M1000 920 1020 960M950 930 960 980 930 1000M1100 860 1100 920 1070 980M1150 860 1170 940 1150 980M1240 860 1240 920 1260 980"/>
                                        <path d="M960 980 1010 990 1030 1040M920 980 930 1040 970 1070M890 970 910 1020"/>
                                    </g>
                                </g>
                            </g>
                        </g>
                        <!-- rios -->
                        <path d="M590 1218C640 1222 700 1200 740 1180" fill="none" stroke="#b5b5b5" stroke-width="10" filter="url(#b4)" opacity=".7"/>
                        <ellipse cx="665" cy="1385" rx="18" ry="12" fill="#808080" filter="url(#b4)"/>
                        <g fill="none" stroke-linecap="round" filter="url(#disp)">
                            <path d="M600 1240C650 1232 700 1220 750 1180 780 1150 790 1120 810 1090" stroke="#4a4a4a" stroke-width="6"/>
                            <g stroke="#5a5a5a" stroke-width="18" stroke-dasharray="1.3 9" stroke-linecap="butt" opacity=".3">
                                <path d="M640 1225C680 1215 720 1200 750 1180 780 1150 790 1120 810 1090"/>
                                <path d="M840 590C870 610 885 640 860 680 830 710 825 750 820 790 810 830 805 850 790 870"/>
                                <path d="M640 920C690 935 730 930 760 915M600 1000C640 990 680 1000 720 1020M640 1100C680 1110 720 1110 750 1080M660 1160C690 1140 730 1130 770 1110"/>
                                <path d="M620 1250C660 1285 720 1285 790 1290 850 1300 900 1290 950 1275"/>
                            </g>
                            <path d="M760 520C770 545 790 570 840 590 870 610 885 640 860 680 830 710 825 750 820 790 810 830 805 850 790 870" stroke="#565656" stroke-width="5"/>
                            <path d="M720 620C760 615 810 640 850 660M700 680C740 680 790 700 825 725M785 672C800 685 815 690 832 710M640 920C690 935 730 930 760 915 780 895 780 880 790 870M750 800C770 810 790 840 800 860M690 760C730 770 760 790 780 800" stroke="#606060" stroke-width="3.5"/>
                            <path d="M600 1000C640 990 680 1000 720 1020M640 1100C680 1110 720 1110 750 1080M660 1160C690 1140 730 1130 770 1110M650 960C690 970 720 960 750 940M620 1060C650 1060 680 1050 700 1030M690 1130C710 1100 740 1060 760 1040M730 1010C750 1000 770 980 790 960" stroke="#636363" stroke-width="2.5"/>
                            <path d="M590 1190C540 1190 480 1185 450 1215 420 1240 380 1250 350 1290" stroke="#747474" stroke-width="3"/>
                            <path d="M620 1250C660 1285 720 1285 790 1290 850 1300 900 1290 950 1275M660 1285C650 1300 640 1310 620 1320M720 1285C715 1310 700 1320 690 1340M800 1290C800 1310 790 1330 770 1340M870 1295C880 1310 890 1320 905 1330M760 1255C790 1265 810 1270 840 1260" stroke="#6e6e6e" stroke-width="2.5"/>
                            <g stroke="#5e5e5e" stroke-width="1.6" opacity=".75">
                                <path d="M1010 420C1030 460 1010 470 990 480M1030 380C1020 410 1020 420 1010 430M980 300C1000 340 990 370 1020 400M1060 240C1070 280 1050 300 1030 320M1050 170C1050 200 1070 220 1060 240M1000 250C1010 270 1000 280 980 300M900 410C900 450 890 480 930 500M1090 120C1100 150 1085 180 1080 210M960 330C950 370 960 400 950 440M880 380C870 410 880 440 860 470M1040 310C1060 320 1075 340 1080 360M1000 490C980 520 960 530 950 570"/>
                            </g>
                            <path d="M1160 480C1200 460 1230 460 1275 440" stroke="#505050" stroke-width="2"/>
                        </g>
                        <rect x="295" y="10" width="1230" height="1560" filter="url(#grain)"/>
                        <path d="M500 1270C530 1265 540 1280 520 1295" fill="none" stroke="#777" stroke-width="6" stroke-dasharray="1 3"/>
                        <path d="M435 742h34M440 736h20M442 748h22" stroke="#b8b8b8" stroke-width="4" stroke-dasharray="2 2"/>
                        <path d="M405 790h40M408 780h34" stroke="#777" stroke-width="5" stroke-dasharray="1 3"/>
                        <!-- poblacion -->
                        <g fill="none" stroke-width="3.5">
                            <path stroke="#b3102c" d="M592 329h6M551 483h4M726 585h4M572 961h6M610 1030h5M636 997h5M762 920h4M800 853h8M660 125h3M746 155h3M630 187h3M642 212h3M690 253h3M612 292h3M738 332h3M578 510h3M583 538h3M636 540h3M556 598h3M544 582h3M530 616h3M590 642h3M640 658h3M668 680h3M750 513h3M795 487h3M824 488h3M786 572h3M718 620h3M730 800h3M720 850h4M766 842h3M700 828h3M684 825h3M686 938h3M580 928h4M530 918h3M518 942h3M590 995h4M545 1017h3M562 1047h3M628 1058h3M808 884h3"/>
                            <path stroke="#e04a28" d="M976 385h4M930 288h3M968 440h3M930 597h3M884 698h4M936 704h3M870 733h3M918 735h3M808 750h3M742 703h3M646 1095h4M656 1145h4M636 1167h5M688 1176h4M668 1252h5M744 1232h6M612 1244h4M700 1068h3M722 1000h3M760 1072h3M765 1020h3M828 1090h3M946 845h3M992 792h3M1010 772h3M530 1295h3M580 1312h3M740 1305h3"/>
                            <path stroke="#f28a30" d="M660 806h8M697 717h3M646 733h4M600 741h3M562 767h3M574 790h3M630 1185h3M540 1392h12M664 1328h4M632 1385h3M700 1407h3M598 1392h3M365 1515h4M480 1460h3M560 882h3M600 908h3M1046 648h3M1090 395h4M1075 490h3M974 665h3M1025 690h3M658 882h3"/>
                            <path stroke="#ffc84a" d="M1188 153h8M1208 125h5M1165 98h3M1122 155h3M1120 237h3M1218 48h3M1165 150h3M1188 165h4M1114 300h3M1110 306h8M1108 312h8M1110 318h6M1045 290h3M1060 293h3M1100 342h3M1066 340h3M1036 355h3M1132 272h3M747 1185h4M945 1275h8M852 1160h3M820 1120h3"/>
                            <path stroke="#fff4a0" d="M852 880h4M860 890h5M848 895h3M855 900h6M835 905h4M830 910h3M845 908h3M860 872h3M868 818h3M848 815h3M852 860h3M838 900h3M866 888h3M812 1198h6M822 1202h5M830 1198h6M845 1195h8M852 1180h4M855 1188h6M852 1203h8M860 1212h6M868 1205h8M872 1218h6M850 1222h5M865 1225h8M880 1230h4M842 1210h4M858 1235h4M840 1228h3M888 1238h3M835 1250h3M828 1262h3M860 1258h3M815 1220h3M805 1195h3M875 1195h3M855 1170h3M850 1150h3M853 765h3M848 848h3M905 1238h3M882 1245h3"/>
                        </g>
                    </g>
                    <!-- limite provincial -->
                    <path d="M612 40H1305V55L1285 70H1262L1252 85 1250 115 1262 150 1255 190 1240 225 1235 255 1222 290 1190 302 1178 322 1150 332 1145 350 1128 368 1134 390 1125 440 1115 475 1135 510 1122 560 1103 575 1110 600 1105 620 1118 650 1118 680 1100 700 1080 730 1060 765 1035 785 1005 820 1000 845 965 870 945 880 935 895 905 912 875 917 860 945 868 985 860 1020 865 1060 842 1105 850 1130 855 1170 870 1205 900 1240 925 1260 960 1262 965 1285 945 1320 930 1330 915 1370 880 1365 850 1355 818 1347 800 1370 610 1543H326L590 1225 597 1190 585 1160 555 1145 560 1105 530 1060 495 1015 498 985 485 950 485 910 510 892 580 690 510 625z" fill="none" stroke="#f7f7f7" stroke-width="6" stroke-dasharray="46 10 8 10"/>
                </g>
            </svg>
            <svg class="cursor" viewBox="0 0 24 24"><use href="#handp" fill="#111" stroke="#fff" stroke-width="1.3"/></svg>
        </section>

        <section class="dock right">
            <div class="dock-title"><span>Caja de herramientas de Procesos</span>
                <div class="dock-btns"><i class="dbtn"><svg viewBox="0 0 12 12"><rect x="1.5" y="3.5" width="7" height="7" fill="none" stroke="#666"/><rect x="3.5" y="1.5" width="7" height="7" fill="none" stroke="#666"/></svg></i><i class="dbtn"><svg viewBox="0 0 12 12"><path d="M3 3l6 6M9 3l-6 6" stroke="#444" stroke-width="1.5"/></svg></i></div>
            </div>
            <div class="dock-tools pt">
                <svg class="dt" viewBox="0 0 18 18"><path d="M6 0v12M0 6h12M2 2l8 8M10 2l-8 8" stroke="#d8202a" stroke-width="2"/><circle cx="6" cy="6" r="3.5" fill="#d8202a"/><circle cx="13" cy="8" r="3" fill="#777"/><circle cx="10" cy="14" r="2.5" fill="#7fa0cc"/><path d="M14 15h4l-2 2z" fill="#555"/></svg>
                <svg class="dt" viewBox="0 0 18 18"><path d="M8 0C5 0 5 2 5 3v1h4v1H3C1 5 0 7 0 9s1 4 3 4h1v-2c0-2 1-3 3-3h3c1 0 2-1 2-2V3c0-2-1-3-4-3z" fill="#3d7ab0"/><path d="M8 17c3 0 4-1 4-3v-1H8v-1h6c2 0 3-2 3-4s-1-3-3-3h-1v2c0 2-2 3-3 3H7c-1 0-2 1-2 2v2c0 2 1 3 3 3z" fill="#f6d44b"/></svg>
                <svg class="dt" viewBox="0 0 24 24"><circle cx="12" cy="12" r="10" fill="none" stroke="#a8a9a7" stroke-width="1.8"/><path d="M12 5v7l4 4" fill="none" stroke="#a8a9a7" stroke-width="1.5"/></svg>
                <svg class="dt" viewBox="0 0 18 18"><path d="M3 1h9l3 3v13H3z" fill="#f4f4f2" stroke="#bcbcb8"/><path d="M5 6h8M5 9h8M5 12h8" stroke="#bcbcb8"/></svg>
                <i class="vsep"></i>
                <svg class="dt" viewBox="0 0 18 18"><path d="M1 1h11v10H6l-3 5v-5H1z" fill="#dcdcd7"/><path d="M15 3l-4 12" stroke="#e4e4e0" stroke-width="3"/></svg>
                <i class="vsep"></i>
                <svg class="dt" viewBox="0 0 18 18"><path d="M1 4l3-3 1 3 2-1 9 10-2 3L5 7 2 7z" fill="#e8d9a0" stroke="#666" stroke-width=".8"/></svg>
            </div>
            <div class="searchbox">
                <svg width="16" height="16" viewBox="0 0 16 16"><circle cx="6.5" cy="6.5" r="4.5" fill="none" stroke="#888" stroke-width="1.2"/><path d="M10 10l4 4" stroke="#888" stroke-width="1.2"/></svg>
                <span>combinar</span>
                <svg class="clr" width="16" height="14" viewBox="0 0 16 14"><path d="M5 1h10v11H5L0 6.5z" fill="#8c8f91"/><path d="M7 4l5 5M12 4l-5 5" stroke="#eee" stroke-width="1.3"/></svg>
            </div>
            <div class="ptree">
                <div class="pr"><i class="exp closed"></i><svg class="pi"><use href="#clock"/></svg>Usado recientemente</div>
                <div class="pr"><i class="exp open"></i><svg class="pi"><use href="#qgis"/></svg>Cartografía</div>
                <div class="pr leaf"><svg class="pi"><use href="#gear"/></svg>Combinar bases de datos de estilos</div>
                <div class="pr"><i class="exp open"></i><svg class="pi"><use href="#qgis"/></svg>Geometría vectorial</div>
                <div class="pr leaf"><svg class="pi"><use href="#gear"/></svg>Combinar líneas</div>
                <div class="pr leaf"><svg class="pi" viewBox="0 0 16 16"><path d="M1 7h5c0-4 3-6 6-6s4 3 3 6c-1 2-3 3-5 3v5H1z" fill="#6f8ea8"/></svg>Disolver</div>
                <div class="pr leaf"><svg class="pi" viewBox="0 0 16 16"><path d="M2 3h11l1 5-5 2-6-1z" fill="#7ba36d" stroke="#666" stroke-dasharray="1 1" stroke-width=".6"/><path d="M1 15l3-5 4 1-1 4z" fill="#7ba36d"/><path d="M10 11h5v4h-4z" fill="#e4e4e0" stroke="#999" stroke-width=".6"/></svg>Recopilar geometrías</div>
                <div class="pr"><i class="exp open"></i><svg class="pi"><use href="#qgis"/></svg>Vector general</div>
                <div class="pr leaf"><svg class="pi" viewBox="0 0 16 16"><rect x="5.5" y="1.5" width="9" height="9" rx="1" fill="#f2f2f0" stroke="#bdbdb9"/><rect x="1.5" y="5.5" width="9" height="9" rx="1" fill="#e4e4e0" stroke="#bdbdb9"/></svg>Unir capas vectoriales</div>
                <div class="pr"><i class="exp open"></i><svg class="pi" viewBox="0 0 16 16"><circle cx="10" cy="8" r="6" fill="#6da0c8"/><path d="M8 4l5 1-1 4-4-1z" fill="#5f9a5f"/><path d="M1 2l6 3M4 1l-1 5" stroke="#222"/><text x="0" y="15.500" class="svgs" font-size="5.500" font-weight="700" fill="#111">GDAL</text></svg>GDAL</div>
                <div class="pr misc"><i class="exp open"></i>Miscelánea ráster</div>
                <div class="pr leaf2 sel"><svg class="pi" viewBox="0 0 16 16"><path d="M1 14h13v2H1z" fill="#4f81b5"/><path d="M5 10h5v4H5z" fill="#4f81b5"/><path d="M7 11C7 7 10 3 14 1c0 5-2 9-6 10z" fill="#8c9aa5"/></svg>Combinar</div>
            </div>
            <div class="tabs rt">
                <span class="tab">Estilo de capas</span><span class="tab cur">Caja de herramientas de Procesos</span>
            </div>
        </section>
    </main>

    <footer class="statusbar">
        <div class="locator">
            <svg width="16" height="16" viewBox="0 0 16 16"><circle cx="6.5" cy="6.5" r="4.5" fill="none" stroke="#8a8d8f" stroke-width="1.2"/><path d="M10 10l4 4" stroke="#8a8d8f" stroke-width="1.2"/></svg>
            <span>Escriba para localizar (Ctrl+K)</span>
        </div>
        <div class="st-items">
            <span class="st-lbl">Coordenada</span>
            <span class="st-in coord">-57.274,-31.231</span>
            <svg class="st-ic" viewBox="0 0 16 16"><path d="M3 1l10 13M13 2 4 14" stroke="#333" stroke-width="1.5"/><circle cx="8" cy="8" r="4" fill="none" stroke="#444" stroke-width="1.5"/><path d="M4 3h8" stroke="#444"/></svg>
            <span class="st-lbl scale-l">Escala</span>
            <span class="st-in scale">1:2307865<i class="combo-btn"><i class="tri-dn"></i></i></span>
            <svg class="st-ic lock" viewBox="0 0 16 16"><path d="M5 7V4.5a3 3 0 0 1 6 0V7" fill="none" stroke="#666" stroke-width="1.4"/><rect x="3.5" y="7" width="9" height="8" rx="1" fill="#555"/></svg>
            <span class="st-lbl">Amplificador</span>
            <span class="st-in amp">100%<i class="spin"><i class="tri-up"></i><i class="tri-dn"></i></i></span>
            <span class="st-lbl rot-l">Rotación</span>
            <span class="st-in rot">0,0 °<i class="spin"><i class="tri-up"></i><i class="tri-dn"></i></i></span>
            <i class="chk on small"></i>
            <span class="st-lbl rep">Representar</span>
            <svg class="st-ic globe" viewBox="0 0 16 16"><circle cx="8" cy="8" r="6.5" fill="#e8e8e8" stroke="#777"/><path d="M1.5 8h13M8 1.5v13M3 4h10M3 12h10M5 2.5c-2 4-2 7 0 11M11 2.5c2 4 2 7 0 11" fill="none" stroke="#777" stroke-width=".7"/></svg>
            <span class="st-lbl">EPSG:4326</span>
            <svg class="st-ic msg" viewBox="0 0 16 16"><path d="M8 1c4 0 7 2.5 7 6s-3 6-7 6l-2 3v-3.3C3 12 1 10 1 7c0-3.500 3-6 7-6z" fill="#5a5d60"/><path d="M4.5 7h1.500M7.300 7h1.500M10 7h1.500" stroke="#fff" stroke-width="1.4"/></svg>
        </div>
    </footer>
</body>

</html>
```
FILE: styles.css
```css
* {
    box-sizing: border-box;
}

html,
body {
    margin: 0;
    height: 100%;
}

body {
    display: flex;
    flex-direction: column;
    width: 1920px;
    height: 1036px;
    overflow: hidden;
    background: #eff0f1;
    color: #232629;
    font-family: "Noto Sans", "Liberation Sans", sans-serif;
    font-size: 15px;
}

.defs {
    position: absolute;
}

.svgt {
    font-family: "Noto Sans", sans-serif;
}

.svgti {
    font-family: "Liberation Serif", serif;
    font-style: italic;
    font-weight: 700;
}

.svgs {
    font-family: "Liberation Serif", serif;
}

/* barra de titulo */
.titlebar {
    position: relative;
    flex: 0 0 31px;
    display: flex;
    align-items: center;
    justify-content: center;
    background: linear-gradient(#525b63, #3f454c);
    color: #eff0f1;
}

.tb-logo {
    position: absolute;
    left: 3px;
    top: 4px;
    width: 22px;
    height: 22px;
}

.win-btns {
    position: absolute;
    right: 4px;
    top: 5px;
    display: flex;
    align-items: center;
    gap: 8px;
}

/* menu */
.menubar {
    flex: 0 0 27px;
    display: flex;
    align-items: center;
    padding-left: 2.75px;
    border-bottom: 1px solid #d9dbdd;
}

.menubar span {
    padding: 0 7.25px;
}

/* barras de herramientas */
.toolbar {
    flex: 0 0 39px;
    display: flex;
    align-items: center;
    background: linear-gradient(#fafbfb, #f0f1f2);
    border-bottom: 2px solid #bfc2c4;
}

.toolbar.last {
    flex-basis: 38px;
    padding-top: 1px;
}

.tool {
    flex: 0 0 33px;
    height: 31px;
    display: flex;
    align-items: center;
    justify-content: center;
}

.tool svg {
    width: 24px;
    height: 24px;
}

.tool.on {
    background: #d9dbdd;
    border: 1px solid #bdbfc1;
    border-radius: 3px;
    flex-basis: 31px;
    margin: 0 1px;
}

.drop {
    flex: 0 0 12px;
    height: 6px;
    position: relative;
}

.drop::after {
    content: "";
    position: absolute;
    left: 1px;
    top: 0;
    border-left: 5px solid transparent;
    border-right: 5px solid transparent;
    border-top: 5px solid #5d6063;
}

.drop.off::after {
    border-top-color: #c6c7c5;
}

.drop.mini {
    margin: 0 -2.5px 0 -6.5px;
}

.grip {
    flex: 0 0 16px;
    height: 18px;
    background-image: radial-gradient(#c3c5c7 45%, transparent 50%);
    background-size: 3px 3px;
    background-clip: content-box;
    background-origin: content-box;
    padding: 0 5px;
}

.grip.first {
    flex-basis: 12.5px;
    padding: 0 2.5px 0 4px;
}

.grip.narrow {
    flex-basis: 12.5px;
    padding: 0 2px 0 4.5px;
}

.sep {
    flex: 0 0 8px;
    height: 24px;
    background: linear-gradient(#c9cbcd, #c9cbcd) center / 1px 100% no-repeat;
}

/* area principal */
.workspace {
    flex: 1;
    min-height: 0;
    display: flex;
}

.dock {
    display: flex;
    flex-direction: column;
}

.dock.left {
    flex: 0 0 403px;
}

.dock.right {
    flex: 0 0 506px;
    margin-left: 5px;
}

.dock-title {
    display: flex;
    align-items: center;
    justify-content: space-between;
    padding: 0 1px 0 4px;
    flex: 0 0 28px;
}

.right .dock-title {
    padding-right: 0;
}

.dock-btns {
    display: flex;
    gap: 3px;
    margin-top: -2px;
}

.dbtn {
    width: 12px;
    height: 12px;
    border: 1px solid #8f9193;
    border-radius: 2px;
    display: block;
}

.dbtn svg {
    display: block;
    width: 10px;
    height: 10px;
}

.dock-tools {
    flex: 0 0 28px;
    display: flex;
    align-items: center;
    gap: 7.5px;
}

.dock-tools.pt {
    padding-left: 7px;
}

.first-dt {
    margin-left: 7px;
}

.dt {
    width: 18px;
    height: 18px;
    overflow: visible;
}

.vsep {
    width: 1px;
    height: 16px;
    margin: 0 -1px;
    background: #d5d6d7;
}

.tree-wrap {
    flex: 0 0 697px;
    display: flex;
    background: #fcfcfc;
    border: 1px solid #bcbebf;
    overflow: hidden;
}

.tree {
    flex: 1;
    min-width: 0;
}

.row {
    height: 24px;
    display: flex;
    align-items: center;
    white-space: nowrap;
}

.row b {
    font-weight: 700;
}

.row .cur {
    text-decoration: underline;
}

.row em {
    font-weight: 700;
    color: #7b7c7d;
}

.row.sel,
.pr.sel {
    background: #bedff5;
}

.exp {
    flex: 0 0 19px;
    display: flex;
    align-items: center;
    justify-content: center;
}

.exp.closed::before {
    content: "";
    border-top: 4px solid transparent;
    border-bottom: 4px solid transparent;
    border-left: 4px solid #6f7274;
}

.exp.open::before {
    content: "";
    border-left: 4px solid transparent;
    border-right: 4px solid transparent;
    border-top: 4px solid #6f7274;
}

.row.sub {
    padding-left: 20px;
}

.chk {
    flex: 0 0 14px;
    height: 14px;
    margin-left: 4px;
    background-color: #fcfcfc;
    border: 1px solid #b4b6b8;
    border-radius: 2px;
    display: block;
    position: relative;
}

.chk.on::after {
    content: "✓";
    position: absolute;
    left: 1px;
    top: -4px;
    font-size: 12px;
    font-weight: 700;
    color: #1d1f21;
}

.lyr {
    flex: 0 0 13px;
    width: 13px;
    height: 13px;
    margin: 0 7px 0 8px;
}

.lyr.grpic {
    flex-basis: 16px;
    width: 16px;
    height: 16px;
    margin: 0 4px 0 6px;
}

.legend-title {
    height: 24px;
    line-height: 24px;
    padding-left: 63px;
}

.legend {
    height: 97px;
    display: flex;
    padding-left: 63px;
}

.ramp {
    display: block;
    width: 16px;
    height: 94px;
    background: linear-gradient(#f4f4f4, #000);
}

.ramp-labels {
    height: 94px;
    display: flex;
    flex-direction: column;
    justify-content: space-between;
    padding: 0 0 0 8px;
    color: #111;
    line-height: 20px;
}

.vscroll {
    flex: 0 0 14px;
    display: flex;
    flex-direction: column;
    border-left: 1px solid #d9dadb;
    background: #f7f7f7;
}

.sb-btn {
    flex: 0 0 14px;
    display: flex;
    align-items: center;
    justify-content: center;
    background: #f2f3f3;
}

.sb-track {
    flex: 0 0 506px;
    background: #fbfbfb;
}

.sb-thumb {
    flex: 1;
    background: #e7e8e8;
}

.tri-up,
.tri-dn {
    display: block;
    width: 0;
    height: 0;
    border-left: 4px solid transparent;
    border-right: 4px solid transparent;
}

.tri-up {
    border-bottom: 4px solid #6f7274;
}

.tri-dn {
    border-top: 4px solid #6f7274;
}

.tabs {
    display: flex;
    align-items: flex-start;
    height: 34px;
    margin-top: 1px;
}

.tab {
    height: 30px;
    padding: 0 12px;
    line-height: 29px;
    background: #dcdee0;
    border: 1px solid #bcbebf;
    border-top: 0;
    border-radius: 0 0 3px 3px;
}

.tab.cur {
    height: 32px;
    line-height: 31px;
    background: #f4f5f5;
    padding: 0 11px;
    margin-left: -1px;
}

.tabs.rt .tab {
    padding: 0 11px;
}

/* mapa */
.canvas {
    position: relative;
    flex: 0 0 1000px;
    margin: 2px 0 1px 6px;
    background: #fff;
    border: 1px solid #bcbebf;
    overflow: hidden;
}

.map {
    display: block;
    width: 998px;
    height: 782px;
}

.cursor {
    position: absolute;
    left: 807px;
    top: 382px;
    width: 30px;
    height: 30px;
}

/* caja de herramientas */
.searchbox {
    flex: 0 0 30px;
    display: flex;
    align-items: center;
    gap: 8px;
    padding-left: 7px;
    background: #fcfcfc;
    border: 1px solid #b4b6b8;
    border-radius: 3px;
}

.searchbox .clr {
    margin-left: auto;
    margin-right: 8px;
}

.ptree {
    flex: 0 0 666px;
    background: #fcfcfc;
    border: 1px solid #bcbebf;
    border-top: 0;
    padding-top: 2px;
}

.pr {
    height: 24px;
    display: flex;
    align-items: center;
    white-space: nowrap;
}

.pr .pi {
    flex: 0 0 16px;
    width: 16px;
    height: 16px;
    margin-right: 6px;
}

.pr .exp {
    margin-right: 4px;
}

.pr.leaf {
    padding-left: 43px;
}

.pr.misc {
    height: 23px;
    padding-left: 20px;
}

.pr.misc .exp {
    margin-right: 3px;
}

.pr.leaf2 {
    padding-left: 63px;
}

/* barra de estado */
.statusbar {
    flex: 0 0 36px;
    display: flex;
    align-items: center;
    font-size: 12px;
}

.locator {
    margin-left: 4px;
    width: 358px;
    height: 30px;
    display: flex;
    align-items: center;
    gap: 7px;
    padding-left: 7px;
    background: #fcfcfc;
    border: 1px solid #bcbebf;
    border-radius: 3px;
    color: #8a8d8f;
    font-size: 16px;
    letter-spacing: .3px;
}

.st-items {
    margin-left: 604px;
    flex: 1;
    display: flex;
    align-items: center;
}

.st-lbl {
    white-space: nowrap;
}

.st-in {
    position: relative;
    display: block;
    height: 26px;
    line-height: 24px;
    padding-left: 7px;
    background: #fcfcfc;
    border: 1px solid #bcbebf;
    border-radius: 3px;
}

.coord {
    width: 103px;
    margin-left: 3px;
}

.st-ic {
    width: 16px;
    height: 16px;
    flex: 0 0 16px;
}

.st-ic:nth-of-type(1) {
    margin-left: 3px;
}

.scale-l {
    margin-left: 15px;
}

.scale {
    width: 104px;
    margin-left: 3px;
    padding-left: 4px;
}

.combo-btn {
    position: absolute;
    right: 0;
    top: 0;
    bottom: 0;
    width: 21px;
    display: flex;
    align-items: center;
    justify-content: center;
    background: #eff0f1;
    border-left: 1px solid #d4d5d6;
}

.lock {
    margin: 0 7px 0 9px;
}

.amp {
    width: 98px;
    margin-left: 4px;
    padding-left: 4px;
}

.spin {
    position: absolute;
    right: 0;
    top: 0;
    bottom: 0;
    width: 14px;
    display: flex;
    flex-direction: column;
    align-items: center;
    justify-content: space-evenly;
    background: #eff0f1;
    border-left: 1px solid #d4d5d6;
}

.rot-l {
    margin-left: 9px;
}

.rot {
    width: 94px;
    margin-left: 12px;
    padding-left: 4px;
}

.chk.small {
    margin-left: 7px;
}

.rep {
    margin-left: 5px;
}

.globe {
    margin: 0 5px 0 11px;
}

.msg {
    margin-left: 24px;
}
```
